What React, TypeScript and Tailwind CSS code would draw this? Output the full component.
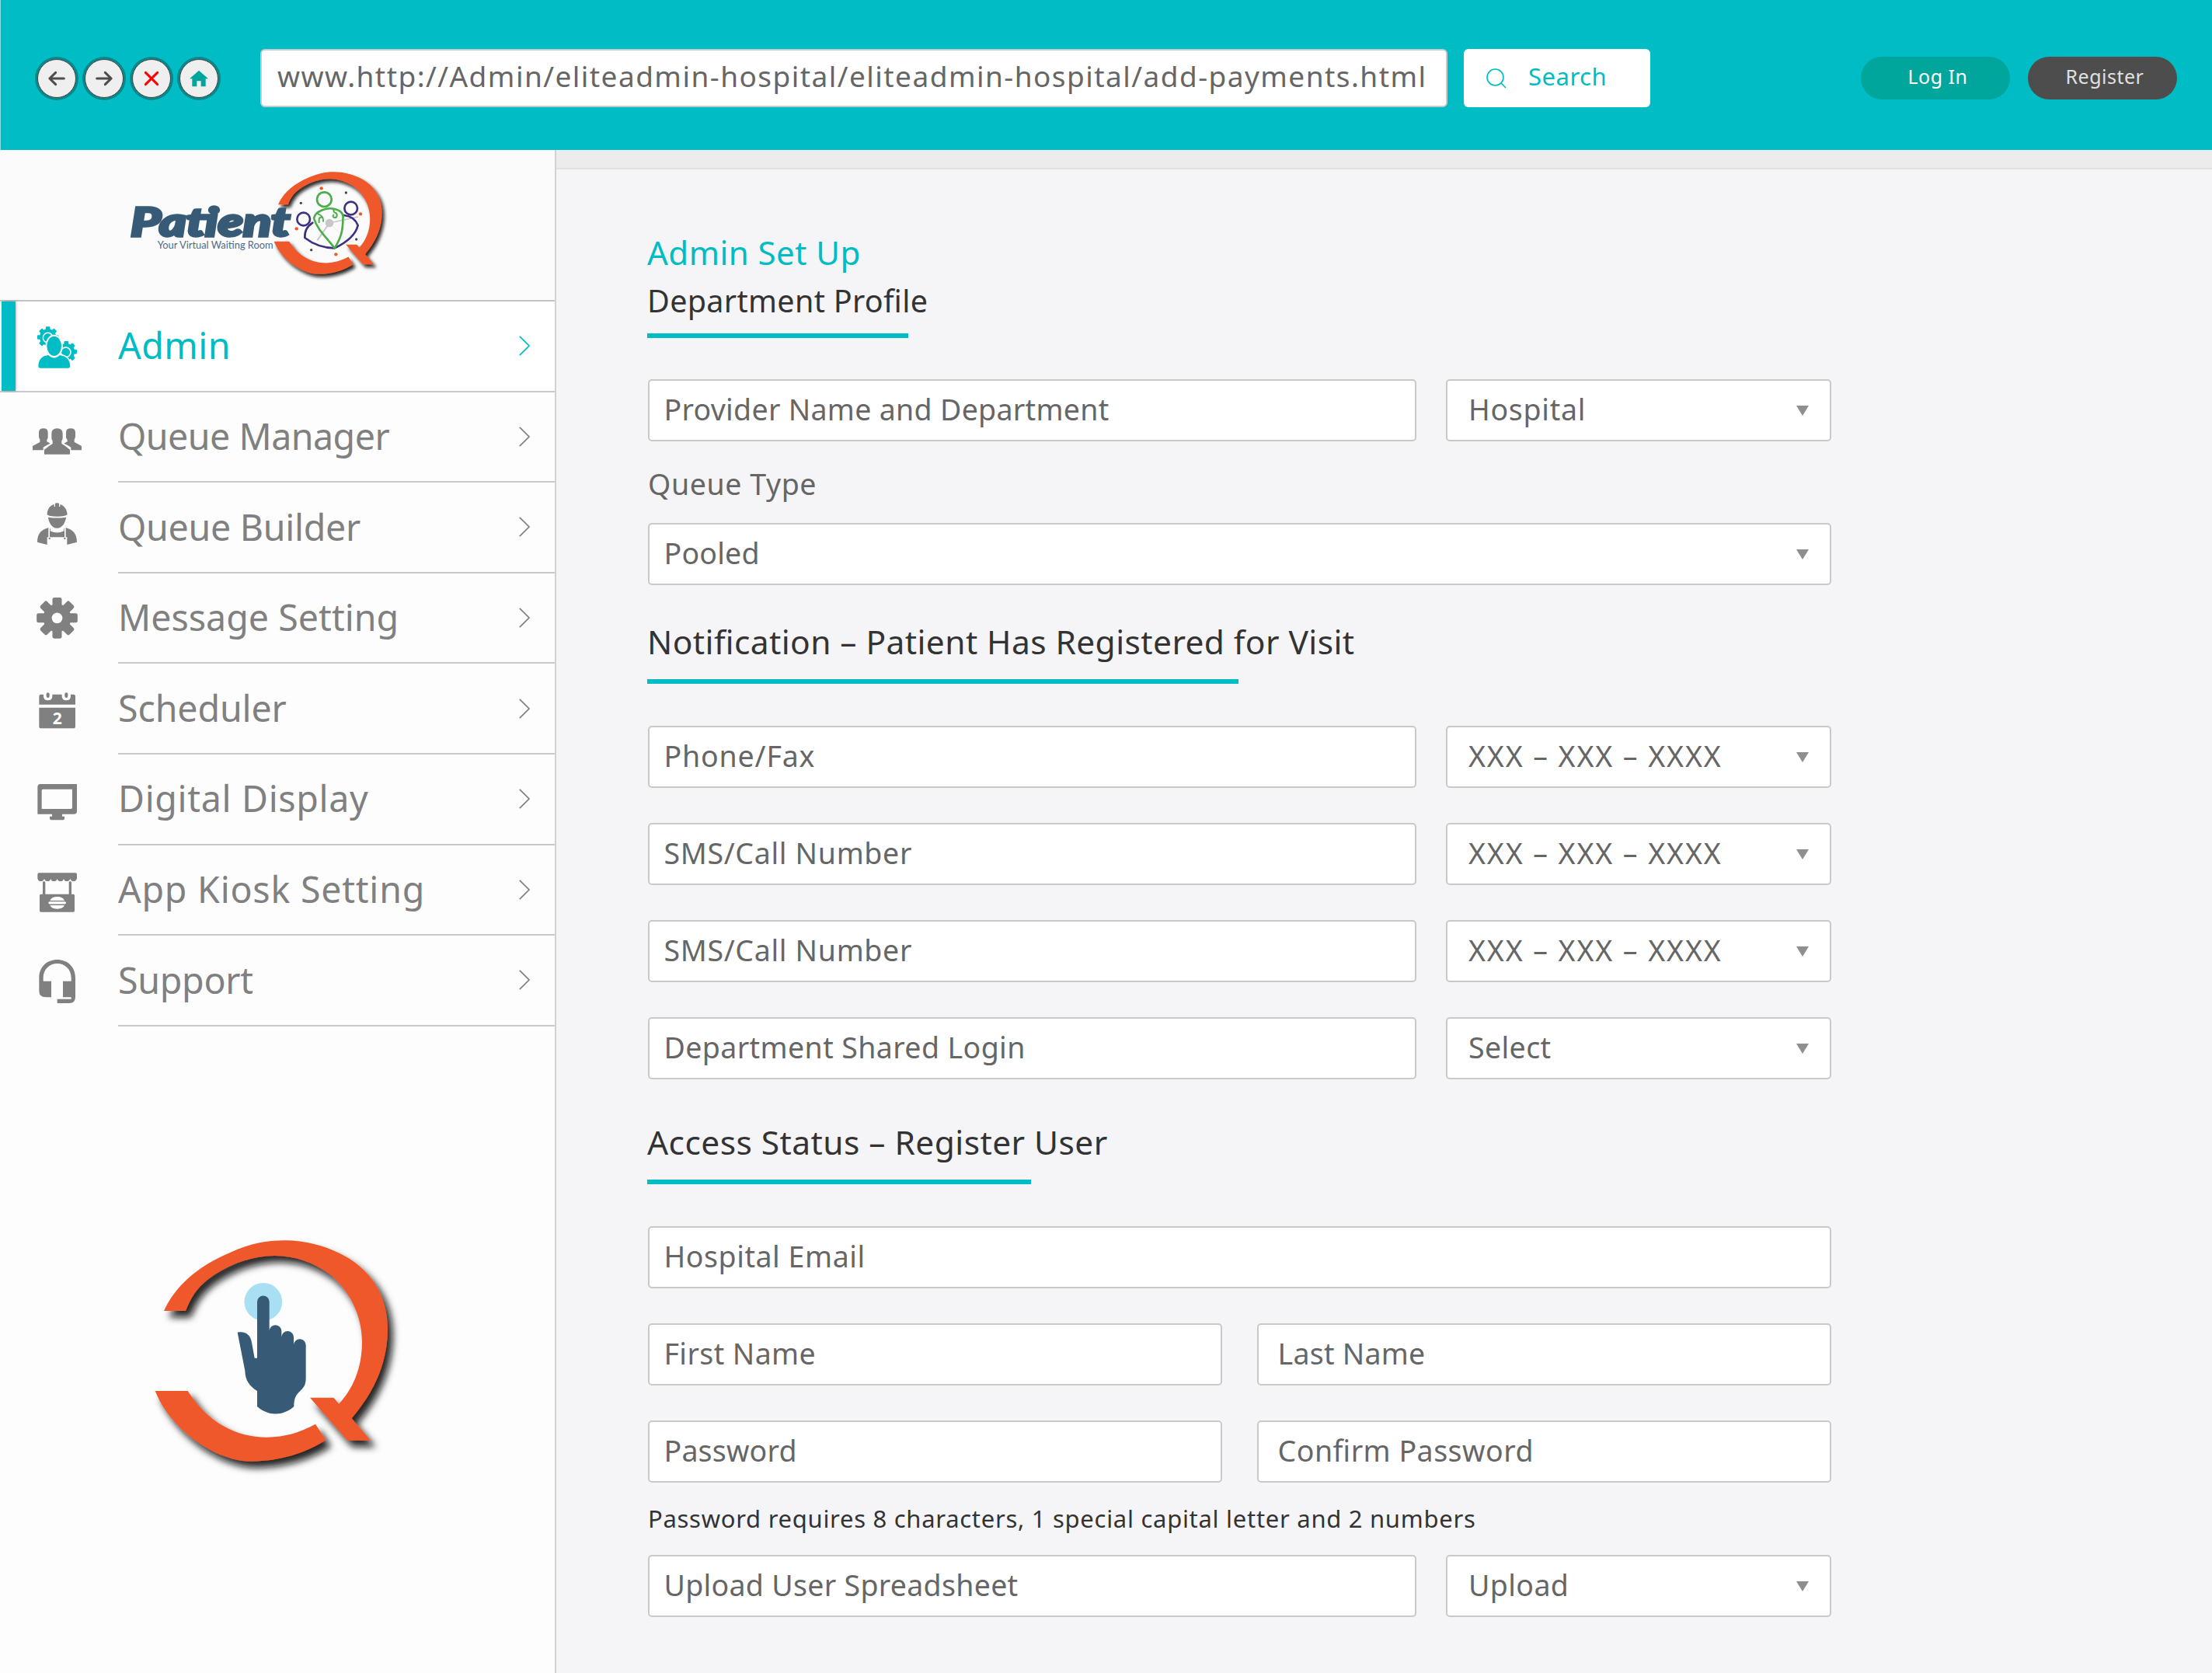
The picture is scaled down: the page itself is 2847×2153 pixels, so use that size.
import type { ReactNode } from 'react';

const TEETH = [0, 45, 90, 135, 180, 225, 270, 315];

function Gear({ cx, cy, body, outer, tooth }: { cx: number; cy: number; body: number; outer: number; tooth: number }) {
  return (
    <g>
      <circle cx={cx} cy={cy} r={body} />
      {TEETH.map((a) => (
        <rect key={a} x={cx - tooth / 2} y={cy - outer} width={tooth} height={outer - body + 12} rx={tooth / 5} transform={`rotate(${a} ${cx} ${cy})`} />
      ))}
    </g>
  );
}

const adminIcon = (
  <svg viewBox="39 -33 240 342" className="h-[114px] w-20" fill="currentColor">
    <Gear cx={125} cy={105} body={32} outer={41} tooth={17} />
    <circle cx="125" cy="107" r="19" fill="none" stroke="#fff" strokeWidth="4.5" />
    <Gear cx={196} cy={161} body={32} outer={41} tooth={17} />
    <circle cx="194" cy="163" r="19" fill="none" stroke="#fff" strokeWidth="4.5" />
    <g stroke="#fff" strokeWidth="11" paintOrder="stroke">
      <path d="M88 215C90 186 106 176 128 174C139 188 159 188 170 174C196 178 209 190 211 215Q211 224 203 224H96Q88 224 88 215Z" />
      <ellipse cx="149" cy="139" rx="28" ry="38" />
    </g>
  </svg>
);

const peopleIcon = (
  <svg viewBox="39 316 240 342" className="h-[114px] w-20" fill="currentColor">
    <path d="M90 468Q90 452 108 452Q125 452 125 468V487Q124 493 121 496V503Q126 506 134 510Q122 514 107 525V536H66V520Q80 512 94 505V494Q90 490 90 484Z" />
    <path d="M231 468Q231 452 213 452Q195 452 195 468V487Q197 493 200 496V503Q195 506 187 510Q199 514 214 525V536H255V520Q241 512 227 505V494Q231 490 231 484Z" />
    <path d="M139 472Q139 452 160.500 452Q182 452 182 472V490Q181 497 178 500V511Q192 519 210 534V552H111V534Q130 519 143 511V500Q140 497 139 490Z" />
  </svg>
);

const builderIcon = (
  <svg viewBox="39 666 240 342" className="h-[114px] w-20" fill="currentColor">
    <path d="M122 787C122 766 133 751 149 747V756H153V743Q160 740 168 743V756H172V747C188 752 199 767 200 787Q192 794 161 794Q128 794 122 787Z" />
    <path d="M126 797Q160 802 195 797C193 816 181 839 160 839C140 839 128 816 126 797Z" />
    <path d="M127 837V874H122V903L84 893C84 861 99 845 127 837Z" />
    <path d="M194 837V874H199V903L237 893C237 861 222 845 194 837Z" />
    <path d="M132 838L136 848Q160 861 185 848L189 838V874H132Z" />
    <path d="M133 848Q160 862 188 848" fill="none" stroke="#fdfdfd" strokeWidth="3" />
    <circle cx="131" cy="879" r="3.500" />
    <circle cx="190" cy="879" r="3.500" />
  </svg>
);

const settingsIcon = (
  <svg viewBox="39 1016 240 342" className="h-[114px] w-20" fill="currentColor">
    <Gear cx={160.5} cy={1185} body={54} outer={79} tooth={36} />
    <circle cx="160.5" cy="1185" r="20.5" fill="#fdfdfd" />
  </svg>
);

const calendarIcon = (
  <svg viewBox="39 -14 240 342" className="h-[114px] w-20" fill="currentColor">
    <path d="M98 99H108V106Q108 122 125 122Q142 122 142 106V99H179V106Q179 122 196 122Q213 122 213 106V99H224Q231 99 231 106V138H91V106Q91 99 98 99Z" />
    <rect x="119" y="92" width="12" height="20" rx="6" />
    <rect x="190" y="92" width="12" height="20" rx="6" />
    <path d="M91 150H231V222Q231 230 223 230H99Q91 230 91 222Z" />
    <text x="161" y="213" textAnchor="middle" fill="#fff" className="text-[63px] font-bold [font-family:'Open_Sans',sans-serif]">2</text>
  </svg>
);

const displayIcon = (
  <svg viewBox="39 336 240 342" className="h-[114px] w-20" fill="currentColor">
    <path fillRule="evenodd" d="M97 447H237V551Q237 563 225 563H189H85V459Q85 447 97 447ZM106 467Q101 467 101 472V543H214Q219 543 219 538V467Z" />
    <path d="M141 560H180V572H189V578Q189 586 181 586H140Q132 586 132 578V572H141Z" />
  </svg>
);

const kioskIcon = (
  <svg viewBox="39 685 240 342" className="h-[114px] w-20" fill="currentColor">
    <path d="M91 788H231Q237 788 237 794V810Q233 820 225 820Q214 820 211 810Q208 820 198 820Q188 820 186 810Q184 820 174 820Q163 820 161 810Q159 820 148 820Q138 820 136 810Q134 820 124 820Q114 820 111 810Q108 820 97 820Q88 820 85 810V794Q85 788 91 788Z" />
    <rect x="105" y="821" width="10" height="52" rx="4" />
    <rect x="206" y="821" width="10" height="52" rx="4" />
    <rect x="93" y="870" width="135" height="69" rx="5" />
    <path fill="#fff" d="M133 895Q139 880 161 880Q183 880 189 895ZM133 913Q139 927 161 927Q183 927 189 913Z" />
    <rect x="127" y="898.5" width="68" height="10" rx="5" fill="#fff" />
  </svg>
);

const supportIcon = (
  <svg viewBox="39 1035 240 342" className="h-[114px] w-20" fill="currentColor">
    <path d="M91 1195C91 1152 122 1125 161 1125C200 1125 231 1152 231 1195V1268Q231 1293 208 1293H161V1277H215V1270H183V1208H215V1195C215 1163 191 1140 161 1140C131 1140 107 1163 107 1195V1208H138V1270H116Q91 1270 91 1246Z" />
  </svg>
);

const navItems: { label: string; icon: ReactNode; tracking: string }[] = [
  { label: 'Admin', icon: adminIcon, tracking: 'tracking-[0.5px]' },
  { label: 'Queue Manager', icon: peopleIcon, tracking: 'tracking-[-0.48px]' },
  { label: 'Queue Builder', icon: builderIcon, tracking: 'tracking-[-0.26px]' },
  { label: 'Message Setting', icon: settingsIcon, tracking: 'tracking-[0.04px]' },
  { label: 'Scheduler', icon: calendarIcon, tracking: 'tracking-[-0.1px]' },
  { label: 'Digital Display', icon: displayIcon, tracking: 'tracking-[0.69px]' },
  { label: 'App Kiosk Setting', icon: kioskIcon, tracking: 'tracking-[0.78px]' },
  { label: 'Support', icon: supportIcon, tracking: 'tracking-[-0.25px]' },
];

function QMark({ shadow }: { shadow: string }) {
  return (
    <g fill="#ee5829" filter={`url(#${shadow})`}>
      <path d="M153 381C196 285 285 207 410 155C490 120 550 109 620 109C700 109 770 130 830 158C950 215 1017 320 1017 450C1017 600 950 710 878 796L951 881H861L717 716H808L829 740C884 680 918 600 918 500C918 400 870 300 790 237C730 195 660 168 580 168C500 168 420 195 350 240C290 280 260 320 237 381Z" />
      <path d="M119 690H245C320 810 430 869 550 869C620 868 680 850 738 818L778 880C700 930 600 962 490 962C400 962 300 910 230 845C180 800 140 745 119 690Z" />
    </g>
  );
}

function Shadow({ id }: { id: string }) {
  return (
    <filter id={id} x="-10%" y="-10%" width="130%" height="130%">
      <feDropShadow dx="20" dy="25" stdDeviation="15" floodColor="#0c0c0c" floodOpacity="0.9" />
    </filter>
  );
}

function Logo() {
  return (
    <svg viewBox="0 0 1200 510" className="h-[170px] w-[400px]">
      <defs><Shadow id="logo-shadow" /></defs>
      <g transform="translate(612.8 13) scale(.464 .463)"><QMark shadow="logo-shadow" /></g>
      <g fill="none" strokeWidth="4" stroke="#c9c6ca">
        <path d="M882 261L835 328" strokeWidth="6" />
        <path d="M882 261L994 237" />
        <path d="M882 261L940 318" stroke="#f3d9d9" strokeWidth="2" />
      </g>
      <circle cx="882" cy="261" r="16" fill="#c9c6ca" />
      <g fill="none" strokeWidth="8" strokeLinecap="round" strokeLinejoin="round">
        <g stroke="#3f3182">
          <circle cx="782" cy="246" r="25" />
          <circle cx="965" cy="204" r="25" />
          <path d="M817 260C794 276 786 292 787 318C820 344 860 357 902 358C950 335 983 308 992 270C983 247 966 234 938 231" />
        </g>
        <g stroke="#4aae49">
          <circle cx="862" cy="170" r="28" />
          <path d="M902 358C872 318 834 285 822 243C826 215 874 199 902 207C930 214 938 228 934 248C934 295 924 322 902 358Z" />
          <path d="M838 226C850 230 860 240 858 254M842 258C840 240 846 236 856 240M898 208C898 216 900 222 906 222C914 226 912 240 903 240C895 240 894 232 898 230" strokeWidth="6" />
        </g>
      </g>
      <g fill="#ee5829">
        <circle cx="851" cy="127" r="6.500" /><circle cx="1002" cy="226" r="6.500" />
        <circle cx="755" cy="283" r="6.500" /><circle cx="907" cy="382" r="6.500" />
      </g>
      <g fill="#4a4045">
        <circle cx="946" cy="144" r="5" /><circle cx="772" cy="184" r="5" />
        <circle cx="986" cy="324" r="5" /><circle cx="812" cy="365" r="5" />
      </g>
      <text x="114" y="312" textLength="616" lengthAdjust="spacingAndGlyphs" fill="#375a76" stroke="#375a76" strokeWidth="10" className="text-[154px] font-black italic [font-family:Lato,sans-serif]">Patient</text>
      <text x="218" y="360" textLength="447" lengthAdjust="spacingAndGlyphs" fill="#4f6c85" className="text-[38px] [font-family:Lato,sans-serif]">Your Virtual Waiting Room</text>
    </svg>
  );
}

function TouchMark() {
  return (
    <svg viewBox="0 0 1140 1050" className="h-[350px] w-[380px]">
      <defs><Shadow id="touch-shadow" /></defs>
      <QMark shadow="touch-shadow" />
      <circle cx="536.5" cy="346" r="73" fill="#a8dff3" />
      <path fill="#375a76" d="M513 346A23.500 23.500 0 0 1 560 346V458A23.500 23.500 0 0 1 607 460V481A23.500 23.500 0 0 1 654 484V512A23.500 23.500 0 0 1 701 515V640C701 700 655 680 655 750C613 788 555 788 513 750V690C482 672 466 645 466 612L437 464C468 458 488 475 492 503L503 563H513Z" />
    </svg>
  );
}

function RoundButton({ children }: { children: ReactNode }) {
  return (
    <button className="flex size-14 items-center justify-center rounded-full bg-[#09878b]">
      <span className="flex size-[50px] items-center justify-center rounded-full border border-[#444] bg-[#efefef]">
        <svg viewBox="42 42 84 84" className="size-7" fill="none" strokeWidth="9" strokeLinecap="round" strokeLinejoin="round">{children}</svg>
      </span>
    </button>
  );
}

function Header() {
  return (
    <header className="flex h-[193px] items-center border-l border-[#8adfe3] bg-[#00bcc4] pt-2 pr-[45px] pl-11">
      <div className="flex gap-[5px]">
        <RoundButton><path stroke="#4d4d4d" d="M112 84H57M80 61L56.500 84L80 107" /></RoundButton>
        <RoundButton><path stroke="#4d4d4d" d="M56 84H111M88 61L111.500 84L88 107" /></RoundButton>
        <RoundButton><path stroke="#f00" d="M61 61L107 107M107 61L61 107" /></RoundButton>
        <RoundButton><path fill="#00a59b" d="M84 53L120 85H110V115H92V94H76V115H58V85H48Z" /></RoundButton>
      </div>
      <div className="ml-[51px] flex h-[75px] w-[1528px] items-center overflow-hidden rounded-md border-2 border-[#c4cccd] bg-white pb-1.5 pl-5 text-[37px] tracking-[1.46px] whitespace-nowrap text-[#666]">
        www.http://Admin/eliteadmin-hospital/eliteadmin-hospital/add-payments.html
      </div>
      <button className="ml-[21px] flex h-[75px] w-60 items-center rounded-md bg-white pl-[29px] text-[31px] tracking-[0.5px] text-[#00bcc4]">
        <svg viewBox="0 0 26 26" className="mt-px size-[26px]" fill="none" stroke="currentColor" strokeWidth="1.600">
          <circle cx="11.5" cy="11.500" r="10.500" />
          <path d="M19 19L25 25" />
        </svg>
        <span className="ml-[28px] pb-1">Search</span>
      </button>
      <button className="ml-auto h-[55px] w-[192px] rounded-full bg-[#00a59b] pb-[3px] pl-1.5 text-[25px] tracking-[0.5px] text-white">Log In</button>
      <button className="ml-[23px] h-[55px] w-[192px] rounded-full bg-[#4d4d4d] pb-[3px] pl-1.5 text-[25px] tracking-[0.5px] text-[#e0e0e0]">Register</button>
    </header>
  );
}

function Sidebar() {
  return (
    <aside className="flex w-[716px] shrink-0 flex-col border-r-2 border-[#d2d2d4] bg-[#fdfdfd]">
      <div className="h-[195px] border-b-2 border-[#c4c4c4] bg-[#fbfbfc] pt-[7px] pl-[130px]">
        <Logo />
      </div>
      <nav>
        {navItems.map(({ label, icon, tracking }, i) => (
          <a
            key={label}
            className={
              i === 0
                ? 'flex h-[116.6px] items-center border-b-2 border-[#c9c9c9] bg-white text-[#00bcc4]'
                : 'flex h-[116.6px] items-center text-[#808080]'
            }
          >
            {i === 0 ? <span className="ml-0.5 h-full w-[18px] bg-[#00bcc4] shadow-[1px_0_3px_rgba(0,0,0,0.25)]" /> : <span className="w-5" />}
            <span className="ml-[13px] flex h-[114px] w-20">{icon}</span>
            <span
              className={
                i === 0
                  ? 'ml-[39px] flex h-full flex-1 items-center justify-between pr-[32px]'
                  : 'ml-[39px] flex h-full flex-1 items-center justify-between border-b-2 border-[#c9c9c9] pr-[32px]'
              }
            >
              <span className={`text-[46.5px] whitespace-nowrap ${tracking}`}>{label}</span>
              <svg viewBox="0 0 14 26" className="h-[26px] w-3.5" fill="none" stroke="currentColor" strokeWidth="1.700">
                <path d="M0.800 0.800L13 13L0.800 25.200" />
              </svg>
            </span>
          </a>
        ))}
      </nav>
      <div className="mt-[239px] pl-40">
        <TouchMark />
      </div>
    </aside>
  );
}

function Field({ label, className = '', tracking = 'tracking-[0.4px]', select = false }: { label: string; className?: string; tracking?: string; select?: boolean }) {
  return (
    <div className={`flex h-20 items-center justify-between rounded-[5px] border-2 border-[#c9c9c9] bg-white pr-[27px] text-[37.5px] whitespace-nowrap text-[#666] ${className}`}>
      <span className={`pb-0.5 [font-feature-settings:'liga'_1] ${tracking}`}>{label}</span>
      {select && (
        <svg viewBox="0 0 16 13" className="h-[13px] w-4" fill="#8f8f8f">
          <path d="M0 0H16L8 13Z" />
        </svg>
      )}
    </div>
  );
}

function Row({ label, value, tracking, valueTracking }: { label: string; value: string; tracking?: string; valueTracking?: string }) {
  return (
    <div className="flex gap-[38px]">
      <Field label={label} tracking={tracking} className="w-[989px] pl-[18.5px]" />
      <Field label={value} tracking={valueTracking} select className="w-[496px] pl-[27px]" />
    </div>
  );
}

const PHONE = 'XXX – XXX – XXXX';

function Main() {
  return (
    <main className="flex-1 bg-[#f5f5f8]">
      <div className="h-[25px] border-b-2 border-[#e1e1e1] bg-[#ececec]" />
      <div className="w-[1641px] pt-[77px] pl-[118px] [font-feature-settings:'liga'_1]">
        <h1 className="-ml-px text-[42px] leading-[60px] tracking-[0.48px] text-[#00bcc4]">Admin Set Up</h1>
        <h2 className="mt-0.5 -ml-px text-[39.5px] leading-[60px] tracking-[0.32px] text-[#333]">Department Profile</h2>
        <div className="mt-3 mb-[53px] -ml-px h-1.5 w-[336px] bg-[#00bcc4]" />
        <Row label="Provider Name and Department" value="Hospital" tracking="tracking-[0.3px]" valueTracking="tracking-[0.7px]" />
        <p className="mt-[30px] text-[37.5px] leading-[50px] tracking-[0.6px] text-[#666]">Queue Type</p>
        <Field label="Pooled" tracking="tracking-[0.2px]" select className="mt-[25px] pl-[18.5px]" />

        <h2 className="mt-[43px] -ml-px text-[42.5px] leading-[60px] tracking-[0.4px] whitespace-nowrap text-[#333]">Notification – Patient Has Registered for Visit</h2>
        <div className="mt-[18px] mb-[54px] -ml-px h-1.5 w-[761px] bg-[#00bcc4]" />
        <div className="flex flex-col gap-[45px]">
          <Row label="Phone/Fax" value={PHONE} tracking="tracking-[0.85px]" valueTracking="tracking-[1.9px]" />
          <Row label="SMS/Call Number" value={PHONE} tracking="tracking-[0.68px]" valueTracking="tracking-[1.9px]" />
          <Row label="SMS/Call Number" value={PHONE} tracking="tracking-[0.68px]" valueTracking="tracking-[1.9px]" />
          <Row label="Department Shared Login" value="Select" tracking="tracking-[0.4px]" />
        </div>

        <h2 className="mt-[51px] -ml-px text-[42.5px] leading-[60px] tracking-[0.43px] whitespace-nowrap text-[#333]">Access Status – Register User</h2>
        <div className="mt-[18px] mb-[54px] -ml-px h-1.5 w-[494px] bg-[#00bcc4]" />
        <div className="flex flex-col gap-[45px]">
          <Field label="Hospital Email" tracking="tracking-[0.55px]" className="pl-[18.5px]" />
          <div className="flex gap-[45px]">
            <Field label="First Name" className="w-[739px] pl-[18.5px]" />
            <Field label="Last Name" tracking="tracking-[0.25px]" className="w-[739px] pl-[24.5px]" />
          </div>
          <div className="flex gap-[45px]">
            <Field label="Password" tracking="tracking-[0.2px]" className="w-[739px] pl-[18.5px]" />
            <Field label="Confirm Password" tracking="tracking-[0.5px]" className="w-[739px] pl-[24.5px]" />
          </div>
        </div>
        <p className="mt-[26px] mb-[27px] text-[31px] leading-10 tracking-[0.71px] whitespace-nowrap text-[#333]">
          Password requires 8 characters, 1 special capital letter and 2 numbers
        </p>
        <Row label="Upload User Spreadsheet" value="Upload" tracking="tracking-[0.3px]" />
      </div>
    </main>
  );
}

export default function App() {
  return (
    <div className="flex h-[2153px] w-[2847px] flex-col overflow-hidden [font-family:'Noto_Sans',sans-serif]">
      <Header />
      <div className="flex flex-1">
        <Sidebar />
        <Main />
      </div>
    </div>
  );
}
